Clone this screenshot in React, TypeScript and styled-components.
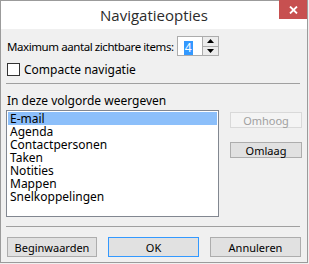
import React from "react";
import styled, { createGlobalStyle } from "styled-components";

const Global = createGlobalStyle`
  html, body { margin: 0; padding: 0; background: #f0f0f0; }
  body { font-family: "Noto Sans", "Open Sans", sans-serif; }
  * { box-sizing: border-box; }
`;

const Window = styled.div`
  width: 308px;
  height: 263px;
  border: 1px solid #9b9b9b;
  background: #f0f0f0;
  display: flex;
  flex-direction: column;
  font-size: 12px;
  color: #000;
`;

const TitleBar = styled.div`
  height: 28px;
  background: #ffffff;
  display: grid;
  grid-template-columns: 1fr auto 1fr;
  align-items: start;
`;

const Title = styled.div`
  grid-column: 2;
  font-family: "Open Sans", sans-serif;
  font-size: 15px;
  line-height: 28px;
  color: #2b2b2b;
`;

const CloseButton = styled.div`
  grid-column: 3;
  justify-self: end;
  width: 28px;
  height: 19px;
  margin-top: -1px;
  background: #c75050;
  display: flex;
  align-items: center;
  justify-content: center;
`;

const Body = styled.div`
  flex: 1;
  display: flex;
  flex-direction: column;
  padding: 7px 5px 0 5px;
`;

const Row = styled.div`
  display: flex;
  align-items: center;
  padding-left: 1px;
  height: 20px;
`;

const Label = styled.span<{ $tight?: boolean }>`
  white-space: nowrap;
  font-size: ${(p) => (p.$tight ? "11.5px" : "12px")};
  letter-spacing: ${(p) => (p.$tight ? "-0.42px" : "normal")};
`;

const Spin = styled.div`
  margin-left: 3px;
  width: 42px;
  height: 20px;
  border: 1px solid #acacac;
  background: #fff;
  display: flex;
`;

const SpinText = styled.div`
  flex: 1;
  padding: 2px 0 0 6px;
`;

const Selected = styled.span`
  background: #3399ff;
  color: #fff;
  padding: 0 1px;
  line-height: 14px;
  display: inline-block;
`;

const SpinButtons = styled.div`
  width: 16px;
  display: flex;
  flex-direction: column;
  border-left: 1px solid #acacac;
`;

const SpinBtn = styled.div<{ $top?: boolean }>`
  flex: 1;
  background: #ececec;
  display: flex;
  align-items: center;
  justify-content: center;
  border-bottom: ${(p) => (p.$top ? "1px solid #acacac" : "none")};
`;

const CheckRow = styled(Row)`
  margin-top: 6px;
  height: 14px;
`;

const CheckBox = styled.div`
  width: 13px;
  height: 13px;
  border: 1px solid #333;
  background: #fff;
  margin-right: 4px;
`;

const Separator = styled.div<{ $mt: number }>`
  height: 1px;
  background: #a0a0a0;
  margin: ${(p) => p.$mt}px 2px 0 0;
`;

const SectionLabel = styled.div`
  margin-top: 9px;
  padding-left: 1px;
  line-height: 16px;
`;

const ListArea = styled.div`
  display: flex;
  margin-top: 1px;
`;

const ListBox = styled.div`
  width: 213px;
  height: 107px;
  border: 1px solid #828790;
  background: #fff;
  padding: 1px;
  display: flex;
  flex-direction: column;
`;

const ListItem = styled.div<{ $selected?: boolean }>`
  height: 13px;
  line-height: 13px;
  padding-left: 2px;
  background: ${(p) => (p.$selected ? "#8cbffa" : "transparent")};
`;

const SideButtons = styled.div`
  margin-left: 11px;
  display: flex;
  flex-direction: column;
  gap: 14px;
  padding-top: 2px;
`;

const Button = styled.div<{ $w: number; $h?: number; $disabled?: boolean; $default?: boolean }>`
  width: ${(p) => p.$w}px;
  height: ${(p) => p.$h ?? 20}px;
  display: flex;
  align-items: center;
  justify-content: center;
  font-size: 11px;
  background: ${(p) => (p.$disabled ? "#f4f4f4" : "#e1e1e1")};
  border: 1px solid
    ${(p) => (p.$disabled ? "#d9d9d9" : p.$default ? "#3399ff" : "#adadad")};
  color: ${(p) => (p.$disabled ? "#a0a0a0" : "#000")};
`;

const Footer = styled.div`
  display: flex;
  gap: 11px;
  padding-left: 1px;
  margin-top: 10px;
`;

const items = [
  "E-mail",
  "Agenda",
  "Contactpersonen",
  "Taken",
  "Notities",
  "Mappen",
  "Snelkoppelingen",
];

export default function App() {
  return (
    <>
      <Global />
      <Window>
        <TitleBar>
          <Title>Navigatieopties</Title>
          <CloseButton>
            <svg width="9" height="8" viewBox="0 0 9 8">
              <path d="M1 0.5 L8 7.5 M8 0.5 L1 7.5" stroke="#fff" strokeWidth="1.8" />
            </svg>
          </CloseButton>
        </TitleBar>
        <Body>
          <Row>
            <Label $tight>Maximum aantal zichtbare items:</Label>
            <Spin>
              <SpinText>
                <Selected>4</Selected>
              </SpinText>
              <SpinButtons>
                <SpinBtn $top>
                  <svg width="7" height="4" viewBox="0 0 7 4">
                    <path d="M3.5 0 L7 4 L0 4 Z" fill="#000" />
                  </svg>
                </SpinBtn>
                <SpinBtn>
                  <svg width="7" height="4" viewBox="0 0 7 4">
                    <path d="M0 0 L7 0 L3.5 4 Z" fill="#000" />
                  </svg>
                </SpinBtn>
              </SpinButtons>
            </Spin>
          </Row>
          <CheckRow>
            <CheckBox />
            <Label>Compacte navigatie</Label>
          </CheckRow>
          <Separator $mt={7} />
          <SectionLabel>In deze volgorde weergeven</SectionLabel>
          <ListArea>
            <ListBox>
              {items.map((it, i) => (
                <ListItem key={it} $selected={i === 0}>
                  {it}
                </ListItem>
              ))}
            </ListBox>
            <SideButtons>
              <Button $w={72} $h={16} $disabled>
                Omhoog
              </Button>
              <Button $w={72} $h={16}>
                Omlaag
              </Button>
            </SideButtons>
          </ListArea>
          <Separator $mt={9} />
          <Footer>
            <Button $w={90}>Beginwaarden</Button>
            <Button $w={91} $default>
              OK
            </Button>
            <Button $w={91}>Annuleren</Button>
          </Footer>
        </Body>
      </Window>
    </>
  );
}
